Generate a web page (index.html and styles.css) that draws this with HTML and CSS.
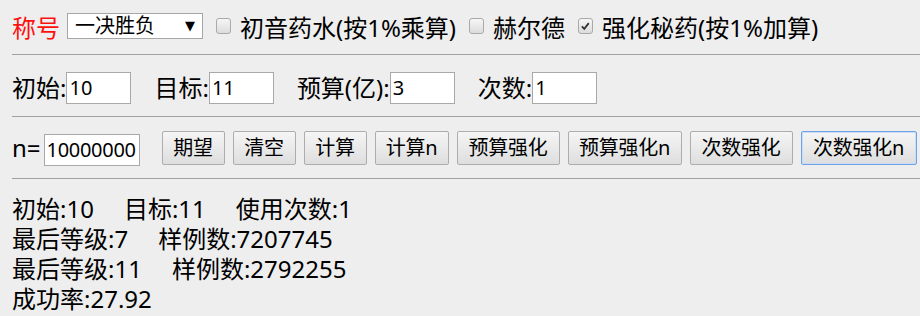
FILE: index.html
```html
<!DOCTYPE html>
<html lang="zh">
<head>
<meta charset="utf-8">
<title>强化模拟</title>
<link rel="stylesheet" href="styles.css">
</head>
<body>
<div class="row row1">
  <span class="title">称号</span>
  <div class="select"><span>一决胜负</span><span class="arrow">▼</span></div>
  <span class="cb"></span><span class="cbl">初音药水(按1%乘算)</span>
  <span class="cb"></span><span class="cbl">赫尔德</span>
  <span class="cb checked"><svg viewBox="0 0 16 16" width="15" height="16"><path d="M3.5 8.5 L6.5 11.5 L12 4.5" fill="none" stroke="#333" stroke-width="2.2"/></svg></span><span class="cbl">强化秘药(按1%加算)</span>
</div>
<hr class="sep sep1">
<div class="row row2">
  <span class="lbl">初始:</span><span class="input w65">10</span>
  <span class="lbl gap">目标:</span><span class="input w65">11</span>
  <span class="lbl gap">预算(亿):</span><span class="input w65">3</span>
  <span class="lbl gap">次数:</span><span class="input w65">1</span>
</div>
<hr class="sep">
<div class="row row3">
  <span class="lbl nlbl">n=</span><span class="input w95">10000000</span>
  <div class="buttons">
    <button class="btn b2">期望</button>
    <button class="btn b2">清空</button>
    <button class="btn b2">计算</button>
    <button class="btn b3">计算n</button>
    <button class="btn b4">预算强化</button>
    <button class="btn b5">预算强化n</button>
    <button class="btn b4">次数强化</button>
    <button class="btn b5 focus">次数强化n</button>
  </div>
</div>
<hr class="sep">
<div class="results">
  <div class="line"><span class="cell">初始:10</span><span class="cell">目标:11</span><span class="cell">使用次数:1</span></div>
  <div class="line"><span class="cell">最后等级:7</span><span class="cell">样例数:7207745</span></div>
  <div class="line"><span class="cell">最后等级:11</span><span class="cell">样例数:2792255</span></div>
  <div class="line"><span class="cell">成功率:27.92</span></div>
</div>
</body>
</html>
```
FILE: styles.css
```css
html, body {
  margin: 0;
  background: #eeeeee;
}
body {
  padding-left: 12px;
  font-family: "Noto Sans", "Noto Sans CJK SC", sans-serif;
  font-size: 24px;
  color: #000;
  overflow: hidden;
}
.row {
  display: flex;
  align-items: center;
  white-space: nowrap;
}
.row > *,
.buttons > * {
  flex-shrink: 0;
}
.row1 {
  height: 52px;
}
.title {
  color: #ff1010;
  margin-right: 7px;
}
.select {
  box-sizing: border-box;
  width: 136px;
  height: 26px;
  border: 1px solid #a6a6a6;
  background: #fff;
  display: flex;
  align-items: center;
  justify-content: space-between;
  padding: 0 7px 0 7px;
  font-size: 20px;
  line-height: 24px;
}
.arrow {
  font-size: 13px;
  font-family: "DejaVu Sans", sans-serif;
}
.cb {
  box-sizing: border-box;
  width: 15px;
  height: 16px;
  border: 1px solid #a9a9a9;
  border-radius: 3px;
  background: linear-gradient(#f6f6f6, #dcdcdc);
  margin-left: 13px;
  margin-right: 9px;
  display: flex;
  align-items: center;
  justify-content: center;
}
.cb svg {
  display: block;
}
.sep {
  border: 0;
  border-top: 1px solid #a0a0a0;
  height: 0;
  margin: 0;
}
.sep1 {
  margin-top: 2px;
}
.row2 {
  padding: 17px 0 12px;
}
.row3 {
  padding: 14px 0 13px;
}
.lbl {
  line-height: 32px;
}
.gap {
  margin-left: 23px;
}
.input {
  box-sizing: border-box;
  height: 32px;
  border: 1px solid #a9a9a9;
  background: #fff;
  font-size: 20px;
  line-height: 30px;
  padding-left: 2px;
  overflow: hidden;
}
.w65 {
  width: 65px;
}
.w95 {
  width: 96px;
  margin-left: 3px;
  align-self: flex-end;
  margin-bottom: -1px;
  letter-spacing: -0.3px;
}
.buttons {
  display: flex;
  gap: 8px;
  margin-left: 22px;
}
.btn {
  box-sizing: border-box;
  height: 34px;
  padding: 0;
  text-align: center;
  border: 1px solid #adadad;
  border-radius: 2px;
  background: linear-gradient(#f5f5f5, #dedede);
  font-family: inherit;
  font-size: 20px;
  color: #000;
  line-height: 30px;
  letter-spacing: -0.2px;
}
.b2 { width: 63px; }
.b3 { width: 74px; }
.b4 { width: 103px; }
.b5 { width: 114px; }
.btn.focus {
  width: 116px;
  border-color: #6fa3e6;
  box-shadow: inset 0 0 0 1px #c9ddf6;
}
.results {
  padding-top: 15px;
}
.line {
  line-height: 30px;
  white-space: nowrap;
}
.cell + .cell {
  margin-left: 30px;
}
```
